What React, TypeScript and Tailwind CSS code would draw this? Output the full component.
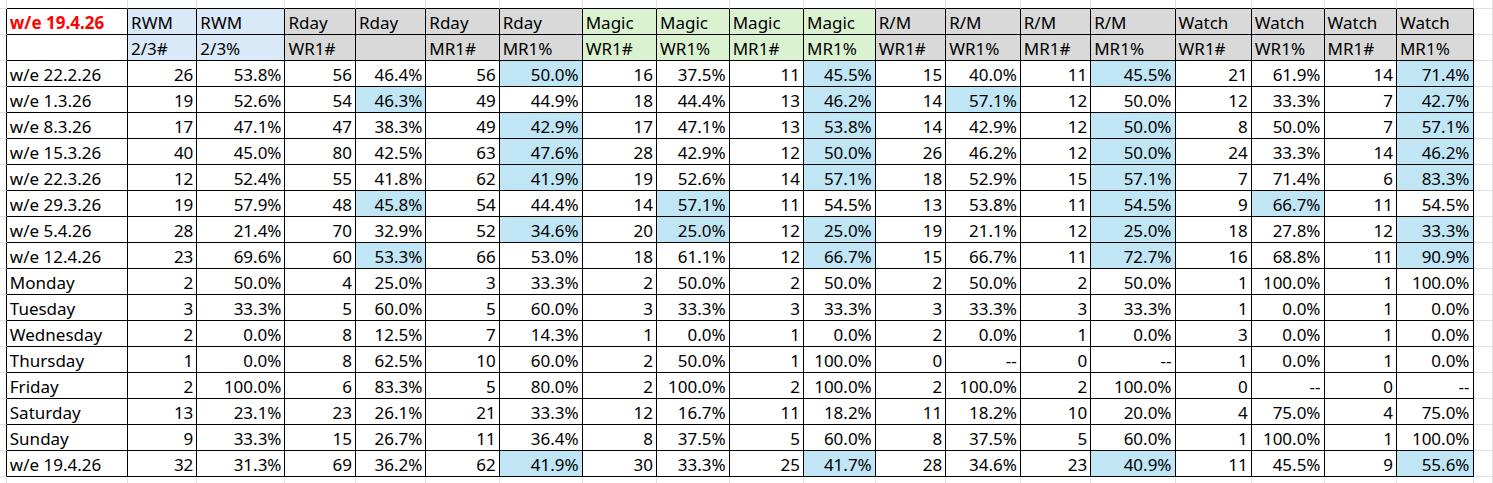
import React from "react";

type Row = { label: string; values: string[]; hl: number[] };

// widths include each cell's right border
const colWidths = [122, 70, 89, 71, 71, 74, 84, 75, 73, 75, 72, 71, 75, 71, 85, 77, 73, 73, 77];

const groups = [
  "RWM", "RWM",
  "Rday", "Rday", "Rday", "Rday",
  "Magic", "Magic", "Magic", "Magic",
  "R/M", "R/M", "R/M", "R/M",
  "Watch", "Watch", "Watch", "Watch",
];

const subHeads = [
  "2/3#", "2/3%",
  "WR1#", "", "MR1#", "MR1%",
  "WR1#", "WR1%", "MR1#", "MR1%",
  "WR1#", "WR1%", "MR1#", "MR1%",
  "WR1#", "WR1%", "MR1#", "MR1%",
];

const headBg = (i: number) => {
  if (i < 2) return "bg-[#dae9f8]";
  if (i >= 6 && i < 10) return "bg-[#daf2d0]";
  return "bg-[#d9d9d9]";
};

const rows: Row[] = [
  { label: "w/e 22.2.26", values: ["26", "53.8%", "56", "46.4%", "56", "50.0%", "16", "37.5%", "11", "45.5%", "15", "40.0%", "11", "45.5%", "21", "61.9%", "14", "71.4%"], hl: [5, 9, 13, 17] },
  { label: "w/e 1.3.26", values: ["19", "52.6%", "54", "46.3%", "49", "44.9%", "18", "44.4%", "13", "46.2%", "14", "57.1%", "12", "50.0%", "12", "33.3%", "7", "42.7%"], hl: [3, 9, 11, 17] },
  { label: "w/e 8.3.26", values: ["17", "47.1%", "47", "38.3%", "49", "42.9%", "17", "47.1%", "13", "53.8%", "14", "42.9%", "12", "50.0%", "8", "50.0%", "7", "57.1%"], hl: [5, 9, 13, 17] },
  { label: "w/e 15.3.26", values: ["40", "45.0%", "80", "42.5%", "63", "47.6%", "28", "42.9%", "12", "50.0%", "26", "46.2%", "12", "50.0%", "24", "33.3%", "14", "46.2%"], hl: [5, 9, 13, 17] },
  { label: "w/e 22.3.26", values: ["12", "52.4%", "55", "41.8%", "62", "41.9%", "19", "52.6%", "14", "57.1%", "18", "52.9%", "15", "57.1%", "7", "71.4%", "6", "83.3%"], hl: [5, 9, 13, 17] },
  { label: "w/e 29.3.26", values: ["19", "57.9%", "48", "45.8%", "54", "44.4%", "14", "57.1%", "11", "54.5%", "13", "53.8%", "11", "54.5%", "9", "66.7%", "11", "54.5%"], hl: [3, 7, 13, 15] },
  { label: "w/e 5.4.26", values: ["28", "21.4%", "70", "32.9%", "52", "34.6%", "20", "25.0%", "12", "25.0%", "19", "21.1%", "12", "25.0%", "18", "27.8%", "12", "33.3%"], hl: [5, 7, 9, 13, 17] },
  { label: "w/e 12.4.26", values: ["23", "69.6%", "60", "53.3%", "66", "53.0%", "18", "61.1%", "12", "66.7%", "15", "66.7%", "11", "72.7%", "16", "68.8%", "11", "90.9%"], hl: [3, 9, 13, 17] },
  { label: "Monday", values: ["2", "50.0%", "4", "25.0%", "3", "33.3%", "2", "50.0%", "2", "50.0%", "2", "50.0%", "2", "50.0%", "1", "100.0%", "1", "100.0%"], hl: [] },
  { label: "Tuesday", values: ["3", "33.3%", "5", "60.0%", "5", "60.0%", "3", "33.3%", "3", "33.3%", "3", "33.3%", "3", "33.3%", "1", "0.0%", "1", "0.0%"], hl: [] },
  { label: "Wednesday", values: ["2", "0.0%", "8", "12.5%", "7", "14.3%", "1", "0.0%", "1", "0.0%", "2", "0.0%", "1", "0.0%", "3", "0.0%", "1", "0.0%"], hl: [] },
  { label: "Thursday", values: ["1", "0.0%", "8", "62.5%", "10", "60.0%", "2", "50.0%", "1", "100.0%", "0", "--", "0", "--", "1", "0.0%", "1", "0.0%"], hl: [] },
  { label: "Friday", values: ["2", "100.0%", "6", "83.3%", "5", "80.0%", "2", "100.0%", "2", "100.0%", "2", "100.0%", "2", "100.0%", "0", "--", "0", "--"], hl: [] },
  { label: "Saturday", values: ["13", "23.1%", "23", "26.1%", "21", "33.3%", "12", "16.7%", "11", "18.2%", "11", "18.2%", "10", "20.0%", "4", "75.0%", "4", "75.0%"], hl: [] },
  { label: "Sunday", values: ["9", "33.3%", "15", "26.7%", "11", "36.4%", "8", "37.5%", "5", "60.0%", "8", "37.5%", "5", "60.0%", "1", "100.0%", "1", "100.0%"], hl: [] },
  { label: "w/e 19.4.26", values: ["32", "31.3%", "69", "36.2%", "62", "41.9%", "30", "33.3%", "25", "41.7%", "28", "34.6%", "23", "40.9%", "11", "45.5%", "9", "55.6%"], hl: [5, 9, 13, 17] },
];

const cell = "h-[26px] border-r border-b border-black px-[3px] pb-[1px] align-bottom leading-[21px] whitespace-nowrap overflow-hidden";
const grid = "border-r border-b border-[#e1e1e1]";

export default function App() {
  return (
    <div className="h-[483px] w-[1493px] overflow-hidden bg-white font-['Noto_Sans',sans-serif] text-[17px] text-black">
      <table className="table-fixed border-separate border-spacing-0">
        <colgroup>
          <col className="w-[7px]" />
          {colWidths.map((w, i) => (
            <col key={i} style={{ width: w }} />
          ))}
          <col className="w-[20px]" />
        </colgroup>
        <tbody>
          {/* sheet gridlines above the table */}
          <tr>
            <td className={`h-[9px] ${grid}`} />
            {colWidths.map((_, i) => (
              <td key={i} className="h-[9px] border-r border-b border-r-[#e1e1e1] border-b-black" />
            ))}
            <td className={`h-[9px] ${grid}`} />
          </tr>

          <tr>
            <td className="border-r border-b border-r-black border-b-[#e1e1e1]" />
            <td className={`${cell} font-bold text-[#ff0000]`}>w/e 19.4.26</td>
            {groups.map((g, i) => (
              <td key={i} className={`${cell} ${headBg(i)}`}>
                {g}
              </td>
            ))}
            <td className={grid} />
          </tr>

          <tr>
            <td className="border-r border-b border-r-black border-b-[#e1e1e1]" />
            <td className={cell} />
            {subHeads.map((s, i) => (
              <td key={i} className={`${cell} ${headBg(i)}`}>
                {s}
              </td>
            ))}
            <td className={grid} />
          </tr>

          {rows.map((row) => (
            <tr key={row.label}>
              <td className="border-r border-b border-r-black border-b-[#e1e1e1]" />
              <td className={cell}>{row.label}</td>
              {row.values.map((v, i) => (
                <td
                  key={i}
                  className={`${cell} text-right ${row.hl.includes(i) ? "bg-[#c0e6f5]" : ""}`}
                >
                  {v}
                </td>
              ))}
              <td className={grid} />
            </tr>
          ))}

          {/* sheet gridlines below the table */}
          <tr>
            <td className={`h-[26px] ${grid}`} />
            {colWidths.map((_, i) => (
              <td key={i} className={`h-[26px] ${grid}`} />
            ))}
            <td className={`h-[26px] ${grid}`} />
          </tr>
        </tbody>
      </table>
    </div>
  );
}
